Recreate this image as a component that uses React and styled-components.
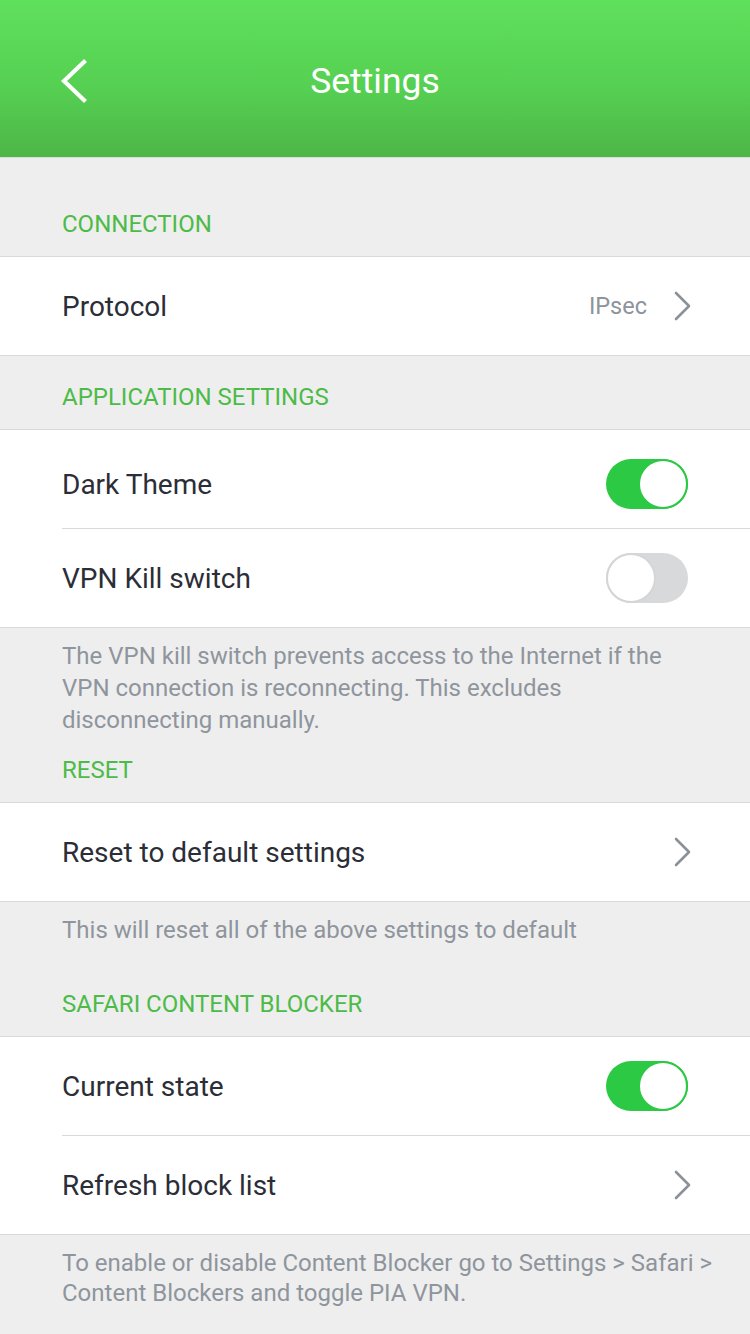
import React from 'react'
import styled, { createGlobalStyle } from 'styled-components'

const GlobalStyle = createGlobalStyle`
  html, body {
    margin: 0;
    padding: 0;
    background: #eeeeee;
    font-family: Roboto, "Noto Sans", "Liberation Sans", sans-serif;
    -webkit-font-smoothing: antialiased;
  }
`

const Page = styled.div`
  width: 750px;
  min-height: 1334px;
  background: #eeeeee;
`

const Header = styled.header`
  height: 157px;
  background: linear-gradient(180deg, #5fe05d 0%, #56d052 55%, #4db648 100%);
  border-bottom: 1px solid #dcdcdc;
  display: grid;
  grid-template-columns: 120px 1fr 120px;
  align-items: center;
`

const BackButton = styled.button`
  background: none;
  border: 0;
  padding: 4px 0 0 58px;
  height: 50px;
  display: flex;
  align-items: center;
  cursor: pointer;
`

const Title = styled.h1`
  margin: 0;
  padding-top: 4px;
  text-align: center;
  color: #ffffff;
  font-size: 35.5px;
  font-weight: 400;
`

const SectionTitle = styled.div`
  padding: ${p => p.$top}px 62px 16px;
  color: #4cbb48;
  font-size: 24px;
  line-height: 32px;
`

const Group = styled.div`
  background: #ffffff;
  border-top: 1px solid #d9d9d9;
  border-bottom: 1px solid #d9d9d9;
`

const Row = styled.div`
  height: ${p => (p.$divider ? 99 : 98)}px;
  box-sizing: border-box;
  padding: ${p => p.$shift || 0}px 60px 0 62px;
  display: flex;
  align-items: center;
  position: relative;
  border-top: ${p => (p.$divider ? '1px solid transparent' : '0')};

  &::before {
    content: '';
    display: ${p => (p.$divider ? 'block' : 'none')};
    position: absolute;
    left: 62px;
    right: 0;
    top: -1px;
    height: 1px;
    background: #d9d9d9;
  }
`

const Label = styled.span`
  flex: 1;
  color: #2c2e37;
  font-size: 28px;
`

const Value = styled.span`
  color: #8d949c;
  font-size: 23.5px;
  margin-right: 25px;
`

const Footer = styled.div`
  padding: ${p => p.$top ?? 12}px ${p => p.$right ?? 62}px 0 62px;
  color: #8e959d;
  font-size: 24px;
  line-height: ${p => p.$lh || 32}px;
`

const Track = styled.div`
  width: 82px;
  height: 50px;
  border-radius: 25px;
  box-sizing: border-box;
  background: ${p => (p.$on ? '#2bc944' : '#d8d9db')};
  display: flex;
  justify-content: ${p => (p.$on ? 'flex-end' : 'flex-start')};
  margin-right: 2px;
`

const Knob = styled.div`
  width: 50px;
  height: 50px;
  border-radius: 50%;
  box-sizing: border-box;
  background: #ffffff;
  border: 2px solid ${p => (p.$on ? '#2bc944' : '#d4d5d7')};
`

const ChevronBox = styled.svg`
  margin-right: -2px;
  flex-shrink: 0;
`

const Chevron = () => (
  <ChevronBox width="20" height="30" viewBox="0 0 20 30">
    <polyline points="4,2 17,15 4,28" fill="none" stroke="#8a9199" strokeWidth="2.6" strokeLinecap="round" strokeLinejoin="round" />
  </ChevronBox>
)

const Toggle = ({ on }) => (
  <Track $on={on}>
    <Knob $on={on} />
  </Track>
)

export default function App() {
  return (
    <Page>
      <GlobalStyle />
      <Header>
        <BackButton aria-label="Back">
          <svg width="30" height="44" viewBox="0 0 30 44">
            <polyline points="26,3 6,22 26,41" fill="none" stroke="#ffffff" strokeWidth="4.2" strokeLinecap="square" />
          </svg>
        </BackButton>
        <Title>Settings</Title>
        <div />
      </Header>

      <SectionTitle $top={50}>CONNECTION</SectionTitle>
      <Group>
        <Row>
          <Label>Protocol</Label>
          <Value>IPsec</Value>
          <Chevron />
        </Row>
      </Group>

      <SectionTitle $top={25}>APPLICATION SETTINGS</SectionTitle>
      <Group>
        <Row $shift={10}>
          <Label>Dark Theme</Label>
          <Toggle on />
        </Row>
        <Row $divider>
          <Label>VPN Kill switch</Label>
          <Toggle on={false} />
        </Row>
      </Group>
      <Footer>
        The VPN kill switch prevents access to the Internet if the VPN connection is reconnecting. This excludes disconnecting manually.
      </Footer>

      <SectionTitle $top={18}>RESET</SectionTitle>
      <Group>
        <Row>
          <Label>Reset to default settings</Label>
          <Chevron />
        </Row>
      </Group>
      <Footer>This will reset all of the above settings to default</Footer>

      <SectionTitle $top={42}>SAFARI CONTENT BLOCKER</SectionTitle>
      <Group>
        <Row>
          <Label>Current state</Label>
          <Toggle on />
        </Row>
        <Row $divider>
          <Label>Refresh block list</Label>
          <Chevron />
        </Row>
      </Group>
      <Footer $top={13} $lh={30} $right={20}>
        To enable or disable Content Blocker go to Settings &gt; Safari &gt; Content Blockers and toggle PIA VPN.
      </Footer>
    </Page>
  )
}
